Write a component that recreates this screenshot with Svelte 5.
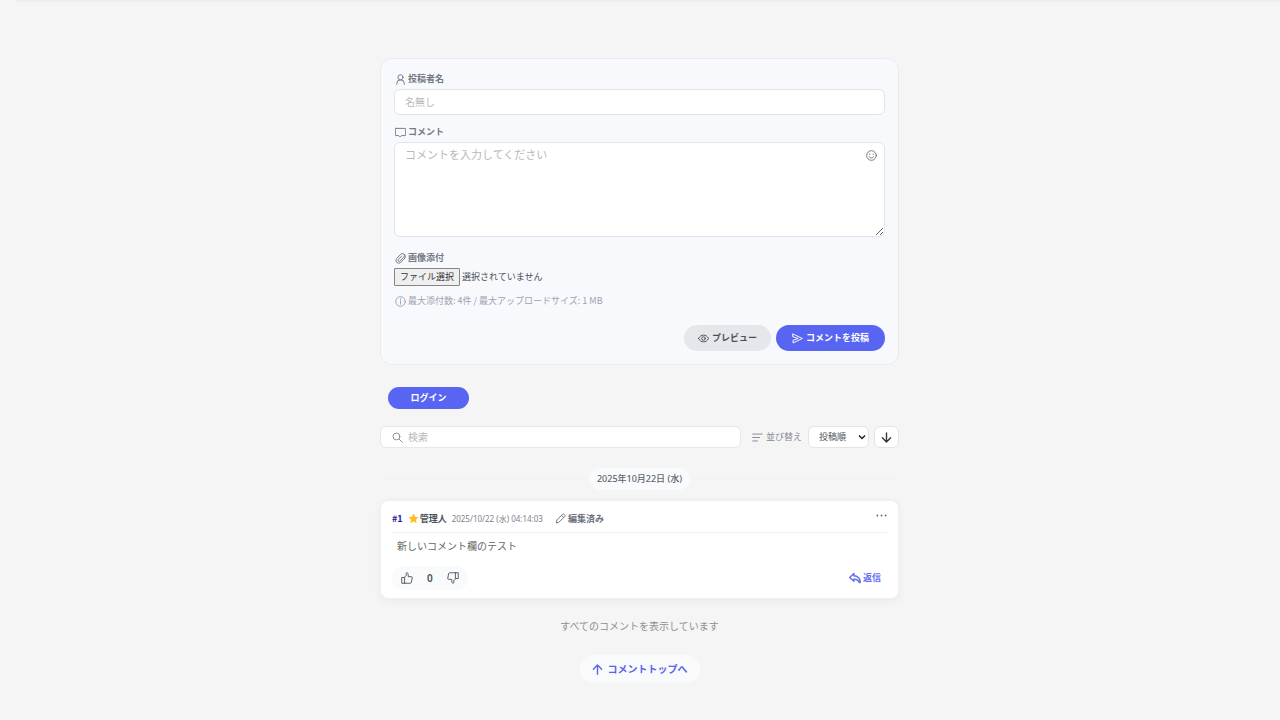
<script>
  let name = $state('');
  let comment = $state('');
  let query = $state('');
  let order = $state('posted');
  let files = $state();
  let fileText = $derived(
    files && files.length ? Array.from(files, (f) => f.name).join(', ') : '選択されていません'
  );

  const icons = {
    user: '<circle cx="8" cy="4.800" r="3.800"/><path d="M2.500 15v-1a5.500 5.500 0 0 1 11 0v1"/>',
    chat: '<path d="M1.500 2h13a1 1 0 0 1 1 1v8.500a1 1 0 0 1-1 1H9.500L7.500 14.500 5.500 12.500h-4a1 1 0 0 1-1-1V3a1 1 0 0 1 1-1z"/>',
    smile: '<circle cx="8" cy="8" r="7"/><path d="M4.800 9.500c1 3 5.400 3 6.400 0M5.500 5.800v.8M10.500 5.800v.8"/>',
    clip: '<path d="M14.500 7.300 8.500 13.500a4 4 0 0 1-6-5.700l6-6.200a3 3 0 0 1 4.500 4l-5.700 6a1.600 1.600 0 0 1-2.400-2.200l5-5.200M14.500 7.300a3.700 3.700 0 0 0-1.300-5.300"/>',
    info: '<circle cx="8" cy="8" r="7"/><path d="M8 7v5M8 4v1.200"/>',
    eye: '<path d="M.8 8C4 1.300 12 1.300 15.200 8 12 14.700 4 14.700.8 8z"/><circle cx="8" cy="8" r="2.600"/>',
    send: '<path d="M1.500 1.500 15 8 1.500 14.500V10.500L9 8 1.500 5.500z"/>',
    search: '<circle cx="6.500" cy="6.500" r="5"/><path d="m10.300 10.300 4.700 4.700"/>',
    sort: '<path d="M1 3h14M1 8h10M1 13h7"/>',
    down: '<path d="M8 1.500v13M2 8.500l6 6 6-6"/>',
    up: '<path d="M8 15V1.500M2 7.500l6-6 6 6"/>',
    star: '<path d="m8 .8 2.200 4.700 5.100.7-3.700 3.500.9 5.100L8 12.300l-4.500 2.500.9-5.100L.7 6.200l5.100-.7z"/>',
    pen: '<path d="m2 14 .8-4L11 1.800a1.400 1.400 0 0 1 2 0l1.200 1.200a1.400 1.400 0 0 1 0 2L6 13.200zM9.500 3.500l3 3"/>',
    more: '<circle cx="2" cy="8" r="1.300"/><circle cx="8" cy="8" r="1.300"/><circle cx="14" cy="8" r="1.300"/>',
    like: '<path d="M4.300 7.300H1V15h3.300zL7 4.500V1.800C7 .5 9.600.8 9.600 3v3.200h4.200c1 0 1.400.7 1.200 1.600l-1.200 6c-.2.800-.7 1.200-1.400 1.200H4.300"/>',
    dislike: '<path d="M11.700 8.700H15V1h-3.300zL9 11.500v2.700c0 1.300-2.600 1-2.600-1.200V9.800H2.200C1.200 9.800.8 9.100 1 8.200l1.200-6C2.400 1.400 2.900 1 3.600 1h8.100"/>',
    reply: '<path d="M6.500 2 1 7.300l5.500 5V9.600c3.700-.5 6 .8 7.500 4.400h1c.3-5-3.200-8.900-8.500-9z"/>'
  };
</script>

{#snippet icon(kind)}
  <svg class="icon icon-{kind}" viewBox="0 0 16 16" aria-hidden="true">{@html icons[kind]}</svg>
{/snippet}

<main>
  <form class="form" onsubmit={(e) => e.preventDefault()}>
    <label class="caption" for="name">{@render icon('user')}投稿者名</label>
    <input id="name" class="field" placeholder="名無し" bind:value={name} />

    <label class="caption" for="comment">{@render icon('chat')}コメント</label>
    <div class="editor">
      <textarea id="comment" class="field" placeholder="コメントを入力してください" bind:value={comment}></textarea>
      <button type="button" class="emoji" aria-label="絵文字">{@render icon('smile')}</button>
    </div>

    <span class="caption">{@render icon('clip')}画像添付</span>
    <div class="file">
      <input id="file" type="file" accept="image/*" multiple bind:files />
      <label for="file">ファイル選択</label>
      <span>{fileText}</span>
    </div>
    <p class="hint">{@render icon('info')}最大添付数: 4件 / 最大アップロードサイズ: 1 MB</p>

    <div class="actions">
      <button type="button" class="pill grey">{@render icon('eye')}プレビュー</button>
      <button class="pill primary">{@render icon('send')}コメントを投稿</button>
    </div>
  </form>

  <button class="login">ログイン</button>

  <div class="tools">
    <label class="search">
      {@render icon('search')}
      <input type="search" placeholder="検索" aria-label="検索" bind:value={query} />
    </label>
    <label class="sorting" for="order">{@render icon('sort')}並び替え</label>
    <select id="order" bind:value={order}>
      <option value="posted">投稿順</option>
      <option value="liked">評価順</option>
    </select>
    <button class="direction" aria-label="降順">{@render icon('down')}</button>
  </div>

  <div class="day"><span>2025年10月22日 (水)</span></div>

  <article class="comment">
    <header>
      <a class="number" href="#1">#1</a>
      <strong>{@render icon('star')}管理人</strong>
      <time datetime="2025-10-22T04:14:03">2025/10/22 (水) 04:14:03</time>
      <span class="edited">{@render icon('pen')}編集済み</span>
      <button class="menu" aria-label="メニュー">{@render icon('more')}</button>
    </header>
    <p>新しいコメント欄のテスト</p>
    <footer>
      <div class="votes">
        <button aria-label="高評価">{@render icon('like')}</button>
        <span>0</span>
        <button aria-label="低評価">{@render icon('dislike')}</button>
      </div>
      <button class="reply">{@render icon('reply')}返信</button>
    </footer>
  </article>

  <p class="end">すべてのコメントを表示しています</p>
  <a class="top" href="#name">{@render icon('up')}コメントトップへ</a>
</main>

<style>
  :global(body) {
    background: linear-gradient(#ebebeb, #f5f5f5) 16px 0 / 100% 3px no-repeat #f5f5f5;
  }
  main {
    display: flex;
    flex-direction: column;
    max-width: 519px;
    margin: 0 auto;
    padding: 58px 16px 36px 15px;
    color: #4b5058;
    font: 9px/14px "Noto Sans", "Noto Sans CJK JP", sans-serif;
  }
  main * {
    box-sizing: border-box;
  }
  button,
  input,
  textarea,
  select {
    margin: 0;
    font: inherit;
    color: inherit;
  }
  button {
    display: flex;
    align-items: center;
    justify-content: center;
    padding: 0;
    border: 0;
    background: none;
    cursor: pointer;
  }
  p {
    margin: 0;
  }
  .icon {
    flex: none;
    width: 11px;
    height: 11px;
    fill: none;
    stroke: currentColor;
    stroke-width: 1.4;
    stroke-linecap: round;
    stroke-linejoin: round;
  }
  .form {
    display: flex;
    flex-direction: column;
    padding: 13px;
    border: 1px solid #e8ebf0;
    border-radius: 12px;
    background: #f8f9fd;
  }
  .caption {
    display: flex;
    align-items: center;
    gap: 2px;
    height: 14px;
    margin-bottom: 3px;
    padding-left: 1px;
    color: #737985;
    font-weight: 700;
  }
  .field {
    display: block;
    width: 100%;
    border: 1px solid #e2e4ea;
    border-radius: 6px;
    background: #fff;
    padding: 4px 10px;
    font-size: 10px;
    line-height: 16px;
    outline: 0;
  }
  .field::placeholder,
  .search input::placeholder {
    color: #b8b8b8;
    opacity: 1;
  }
  input.field {
    height: 26px;
    margin-bottom: 10px;
  }
  .editor {
    position: relative;
    margin-bottom: 14px;
  }
  textarea.field {
    height: 95px;
    font-size: 11px;
    resize: vertical;
  }
  .emoji {
    position: absolute;
    top: 8px;
    right: 8px;
    color: #777;
  }
  .file {
    display: flex;
    align-items: center;
    gap: 2px;
    height: 17px;
    margin-bottom: 1px;
  }
  .file input {
    position: absolute;
    width: 1px;
    height: 1px;
    opacity: 0;
  }
  .file label {
    padding: 1px 5px;
    border: 1px solid #858585;
    border-radius: 1px;
    background: #efefef;
    color: #333;
    line-height: 14px;
  }
  .hint {
    display: flex;
    align-items: center;
    gap: 2px;
    margin-top: 8px;
    padding-left: 1px;
    color: #9ca3af;
    font-family: "Noto Sans CJK JP", sans-serif;
  }
  .actions {
    display: flex;
    justify-content: flex-end;
    gap: 5px;
    margin-top: 17px;
  }
  .pill {
    gap: 3px;
    height: 26px;
    border-radius: 13px;
    font-weight: 700;
  }
  .grey {
    padding: 0 14px;
    background: #e5e7eb;
  }
  .primary {
    padding: 0 16px;
    background: #5865f2;
    color: #fff;
  }
  .login {
    width: 81px;
    height: 22px;
    margin: 22px 0 17px 8px;
    border-radius: 11px;
    background: #5865f2;
    color: #fff;
    font-weight: 700;
  }
  .tools {
    display: flex;
    align-items: center;
    height: 22px;
  }
  .search {
    display: flex;
    flex: 1;
    align-items: center;
    gap: 5px;
    height: 22px;
    padding: 0 11px;
    border: 1px solid #e6e8eb;
    border-radius: 6px;
    background: #fff;
    color: #888e99;
  }
  .search input {
    flex: 1;
    min-width: 0;
    padding: 0;
    border: 0;
    outline: 0;
    background: none;
    font-size: 10px;
    appearance: none;
  }
  .sorting {
    display: flex;
    align-items: center;
    gap: 3px;
    margin: 0 6px 0 11px;
    color: #858a93;
  }
  select {
    width: 61px;
    height: 22px;
    padding: 0 10px;
    border: 1px solid #e2e4e8;
    border-radius: 6px;
    appearance: none;
    background: #fff url("data:image/svg+xml,%3Csvg xmlns='http://www.w3.org/2000/svg' viewBox='0 0 8 8'%3E%3Cpath d='M1 2.500l3 3 3-3' fill='none' stroke='%23222' stroke-width='1.500'/%3E%3C/svg%3E") right 2px center / 8px 8px no-repeat;
  }
  .direction {
    width: 25px;
    height: 22px;
    margin-left: 5px;
    border: 1px solid #e2e4e8;
    border-radius: 6px;
    background: #fff;
    color: #333;
  }
  .icon-down,
  .icon-up {
    stroke-width: 2;
  }
  .day {
    display: flex;
    align-items: center;
    height: 22px;
    margin: 20px 0 10px;
    color: #5f646c;
    font-weight: 500;
  }
  .day::before,
  .day::after {
    flex: 1;
    height: 1px;
    background: #f1f2f3;
    content: "";
  }
  .day span {
    padding: 4px 8px;
    border-radius: 11px;
    background: #f8fafc;
  }
  .comment {
    padding: 7px 11px 8px;
    border: 1px solid #f0f0f0;
    border-radius: 8px;
    background: #fff;
    box-shadow: 0 2px 8px #0000000d;
  }
  header {
    display: flex;
    align-items: center;
    height: 25px;
    padding-bottom: 3px;
    border-bottom: 1px solid #f0f1f3;
  }
  .number {
    color: #2a149c;
    font-family: "Noto Sans CJK JP", sans-serif;
    font-weight: 700;
    text-decoration: none;
  }
  strong,
  .edited {
    display: flex;
    align-items: center;
    gap: 2px;
  }
  strong {
    gap: 1px;
    margin: 0 5px;
  }
  .icon-star {
    fill: #fbbf24;
    stroke: none;
  }
  time {
    color: #7c818a;
    font-size: 8px;
  }
  .edited {
    margin-left: 12px;
    color: #6b7280;
    font-weight: 600;
  }
  .menu {
    margin: 0 0 6px auto;
    color: #666;
  }
  .icon-more {
    fill: currentColor;
    stroke: none;
  }
  .comment p {
    margin: 5px 0 0 5px;
    color: #666;
    font-size: 10px;
    line-height: 16px;
  }
  footer {
    display: flex;
    align-items: center;
    justify-content: space-between;
    margin-top: 12px;
    padding-right: 6px;
  }
  .votes {
    display: flex;
    align-items: center;
    gap: 14px;
    height: 24px;
    padding: 0 9px;
    border-radius: 12px;
    background: #f8fafc;
    font-size: 10px;
    font-weight: 600;
  }
  .votes .icon {
    width: 12px;
    height: 12px;
    stroke-width: 1.2;
  }
  .reply {
    gap: 2px;
    color: #6670ee;
    font-weight: 700;
  }
  .reply .icon {
    width: 12px;
    height: 12px;
    stroke-width: 2;
  }
  .end {
    margin-top: 20px;
    color: #909090;
    font-size: 10px;
    text-align: center;
  }
  .top {
    display: flex;
    align-items: center;
    align-self: center;
    gap: 5px;
    height: 28px;
    margin-top: 22px;
    padding: 0 12px;
    border-radius: 14px;
    background: #f8fafc;
    color: #5c64e8;
    font-size: 10px;
    font-weight: 700;
    text-decoration: none;
  }
</style>
